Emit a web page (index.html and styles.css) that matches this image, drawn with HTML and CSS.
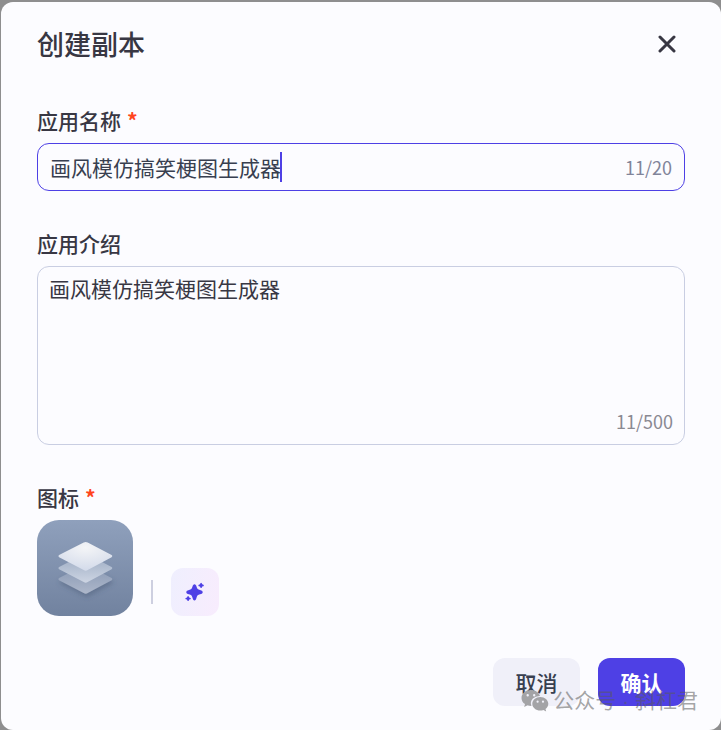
FILE: index.html
```html
<!DOCTYPE html>
<html lang="zh-CN">
<head>
  <meta charset="UTF-8" />
  <meta name="viewport" content="width=device-width, initial-scale=1.0" />
  <title>创建副本</title>
  <link rel="stylesheet" href="styles.css">
</head>
<body>
  <form class="dialog" role="dialog" aria-labelledby="dialog-title">
    <header class="dialog-header">
      <h1 id="dialog-title">创建副本</h1>
      <button type="button" class="close" aria-label="关闭">
        <svg width="18" height="18" viewBox="0 0 18 18" fill="none" stroke="currentColor" stroke-width="3" stroke-linecap="round">
          <path d="M2 2l14 14M16 2L2 16" />
        </svg>
      </button>
    </header>

    <div class="field">
      <label for="name">应用名称<span class="required">*</span></label>
      <div class="control active">
        <input type="text" id="name" maxlength="20" value="画风模仿搞笑梗图生成器" />
        <span class="caret"></span>
        <span class="count">11/20</span>
      </div>
    </div>

    <div class="field">
      <label for="intro">应用介绍</label>
      <div class="control multiline">
        <textarea id="intro" maxlength="500">画风模仿搞笑梗图生成器</textarea>
        <span class="count">11/500</span>
      </div>
    </div>

    <div class="field">
      <span class="label">图标<span class="required">*</span></span>
      <div class="icons">
        <button type="button" class="app-icon" aria-label="上传图标">
          <svg width="96" height="96" viewBox="0 0 96 96">
            <defs>
              <radialGradient id="top" cx="0.5" cy="0.2" r="0.75">
                <stop offset="0" stop-color="#f4f5f7" />
                <stop offset="1" stop-color="#d5dceb" />
              </radialGradient>
              <linearGradient id="middle" x1="0" y1="0" x2="0" y2="1">
                <stop offset="0.3" stop-color="#a9b6cb" />
                <stop offset="1" stop-color="#cdd5e3" />
              </linearGradient>
              <linearGradient id="bottom" x1="0" y1="0" x2="0" y2="1">
                <stop offset="0.3" stop-color="#93a1ba" />
                <stop offset="1" stop-color="#adb7ca" />
              </linearGradient>
              <filter id="shadow" x="-30%" y="-30%" width="160%" height="180%">
                <feDropShadow dx="1" dy="3" stdDeviation="2.5" flood-color="#3d4d6b" flood-opacity="0.4" />
              </filter>
              <path id="layer" d="M46.700 22.500Q48.700 21.400 50.700 22.500L74.600 35.100Q76.200 36.200 74.600 37.300L50.700 50.100Q48.700 51.200 46.700 50.100L22.100 37.300Q20.500 36.200 22.100 35.100Z" />
            </defs>
            <use href="#layer" y="23" fill="url(#bottom)" filter="url(#shadow)" />
            <use href="#layer" y="12" fill="url(#middle)" />
            <use href="#layer" fill="url(#top)" />
          </svg>
        </button>
        <span class="divider"></span>
        <button type="button" class="generate" aria-label="AI 生成图标">
          <svg width="20" height="20" viewBox="0 0 20 20" fill="currentColor">
            <path d="M9.500 2.300C10.600 2.300 11 3.200 11.500 4.600C12.200 6.900 12.800 7.500 15 8.100C16.800 8.600 17.700 9.200 17.700 10.200C17.700 11.200 16.800 11.800 15 12.300C12.800 12.900 12.200 13.500 11.500 15.800C11 17.500 10.600 18.400 9.500 18.400C8.400 18.400 8 17.500 7.500 15.800C6.800 13.500 6.200 12.900 4 12.300C2.200 11.800 1.300 11.200 1.300 10.200C1.300 9.200 2.200 8.600 4 8.100C6.200 7.500 6.800 6.900 7.500 4.600C8 3.200 8.400 2.300 9.500 2.300Z" />
            <path d="M16.1.8Q16.900.8 17.200 2.300Q18.900 2.600 18.900 3.400Q18.900 4.200 17.200 4.500Q16.900 6 16.100 6Q15.300 6 15 4.500Q13.300 4.200 13.300 3.400Q13.300 2.600 15 2.300Q15.300.8 16.100.8Z" />
            <path d="M3.100 13.900Q3.900 13.900 4.200 15.400Q5.900 15.700 5.900 16.500Q5.900 17.300 4.200 17.600Q3.900 19.100 3.100 19.100Q2.300 19.100 2 17.600Q.3 17.300.3 16.500Q.3 15.700 2 15.400Q2.300 13.900 3.100 13.900Z" />
          </svg>
        </button>
      </div>
    </div>

    <footer class="actions">
      <button type="button" class="btn">取消</button>
      <button type="submit" class="btn primary">确认</button>
    </footer>

    <div class="watermark">
      <svg width="28" height="24" viewBox="0 0 28 24">
        <path fill="#a3a3a6" fill-rule="evenodd" d="M10 1C4.700 1 .5 4.500.5 9C.5 11.500 1.800 13.700 4 15.100L3.200 18L6.500 16.300Q8.200 16.900 10.400 16.900Q8.800 12.800 11.800 9.600Q14.700 6.800 19 7C18 3.500 14.400 1 10 1ZM6.700 5A1.200 1.200 0 1 1 6.700 7.400A1.200 1.200 0 1 1 6.700 5ZM13.200 5A1.200 1.200 0 1 1 13.200 7.400A1.200 1.200 0 1 1 13.200 5Z" />
        <path fill="#a3a3a6" fill-rule="evenodd" d="M19.300 8C14.800 8 11.300 11 11.300 14.800C11.300 18.600 14.800 21.600 19.300 21.600Q21 21.600 22.400 21.100L25.200 22.600L24.500 20.100C26.200 18.800 27.300 16.900 27.300 14.800C27.300 11 23.800 8 19.300 8ZM16.600 11.600A1.100 1.100 0 1 1 16.600 13.800A1.100 1.100 0 1 1 16.600 11.600ZM22 11.600A1.100 1.100 0 1 1 22 13.800A1.100 1.100 0 1 1 22 11.600Z" />
      </svg>
      <span>公众号 · 斜杠君</span>
    </div>
  </form>
</body>
</html>
```
FILE: styles.css
```css
* {
  box-sizing: border-box;
}
body {
  margin: 0;
  padding: 2px 0 0 1px;
  min-height: 100vh;
  display: flex;
  background: #8e8e8f;
  color: #383743;
  font-family: "Noto Sans CJK SC", sans-serif;
  font-size: 21px;
}
button, input, textarea {
  font: inherit;
  color: inherit;
}
button {
  padding: 0;
  border: none;
  cursor: pointer;
}
.dialog {
  position: relative;
  flex: 1;
  padding: 22px 36px 24px;
  background: #fcfcff;
  border-radius: 12px;
}
.dialog-header {
  display: flex;
  align-items: center;
  justify-content: space-between;
  margin-bottom: 42px;
}
h1 {
  margin: 0;
  font-size: 27px;
  line-height: 40px;
  font-weight: 500;
}
.close {
  display: flex;
  padding: 9px;
  background: none;
}
.field {
  margin-bottom: 38px;
}
label, .label {
  display: block;
  margin-bottom: 9px;
  line-height: 28px;
  font-weight: 500;
}
.required {
  margin-left: 6px;
  color: #ff441e;
  font-weight: 700;
}
.control {
  position: relative;
  display: flex;
  align-items: center;
  height: 48px;
  padding: 0 12px;
  border: 1px solid #c9cee2;
  border-radius: 12px;
}
.control.active {
  border-color: #4e40e5;
  color: #383f50;
}
.control input {
  flex: 1;
  min-width: 0;
  height: 46px;
  padding: 0;
  border: none;
  outline: none;
  background: none;
}
/* sits right after the eleventh character */
.caret {
  position: absolute;
  left: 242px;
  top: 8px;
  width: 2px;
  height: 30px;
  background: #4e40e5;
}
.count {
  font-size: 18px;
  line-height: 28px;
  color: #81849a;
}
.control.multiline {
  flex-direction: column;
  align-items: stretch;
  height: auto;
  padding: 6px 11px 9px;
}
.control textarea {
  display: block;
  width: 100%;
  height: 134px;
  padding: 0;
  border: none;
  outline: none;
  resize: none;
  background: none;
  line-height: 30px;
}
.multiline .count {
  align-self: flex-end;
  color: #8a8992;
}
.icons {
  display: flex;
  align-items: flex-end;
  gap: 18px;
}
.app-icon {
  display: flex;
  border-radius: 22px;
  overflow: hidden;
  background: linear-gradient(#8fa0bc, #71829f);
}
.divider {
  width: 2px;
  height: 24px;
  margin-bottom: 12px;
  background: #cdcfe0;
}
.generate {
  display: flex;
  align-items: center;
  justify-content: center;
  width: 48px;
  height: 48px;
  border-radius: 12px;
  background: linear-gradient(100deg, #efeffe, #f8ecfd);
  color: #4e40e5;
}
.actions {
  display: flex;
  justify-content: flex-end;
  gap: 18px;
  margin-top: 42px;
}
.btn {
  width: 87px;
  height: 48px;
  border-radius: 12px;
  background: #f0f0f9;
  color: #383f50;
  font-weight: 500;
}
.btn.primary {
  background: #4e40e5;
  color: #fff;
  font-weight: 700;
}
.watermark {
  position: absolute;
  right: 23px;
  bottom: 15px;
  display: flex;
  align-items: center;
  gap: 4px;
  font-family: "Liberation Sans", "Noto Sans CJK SC", sans-serif;
  line-height: 28px;
  color: rgba(90, 90, 90, 0.55);
  pointer-events: none;
}
```
